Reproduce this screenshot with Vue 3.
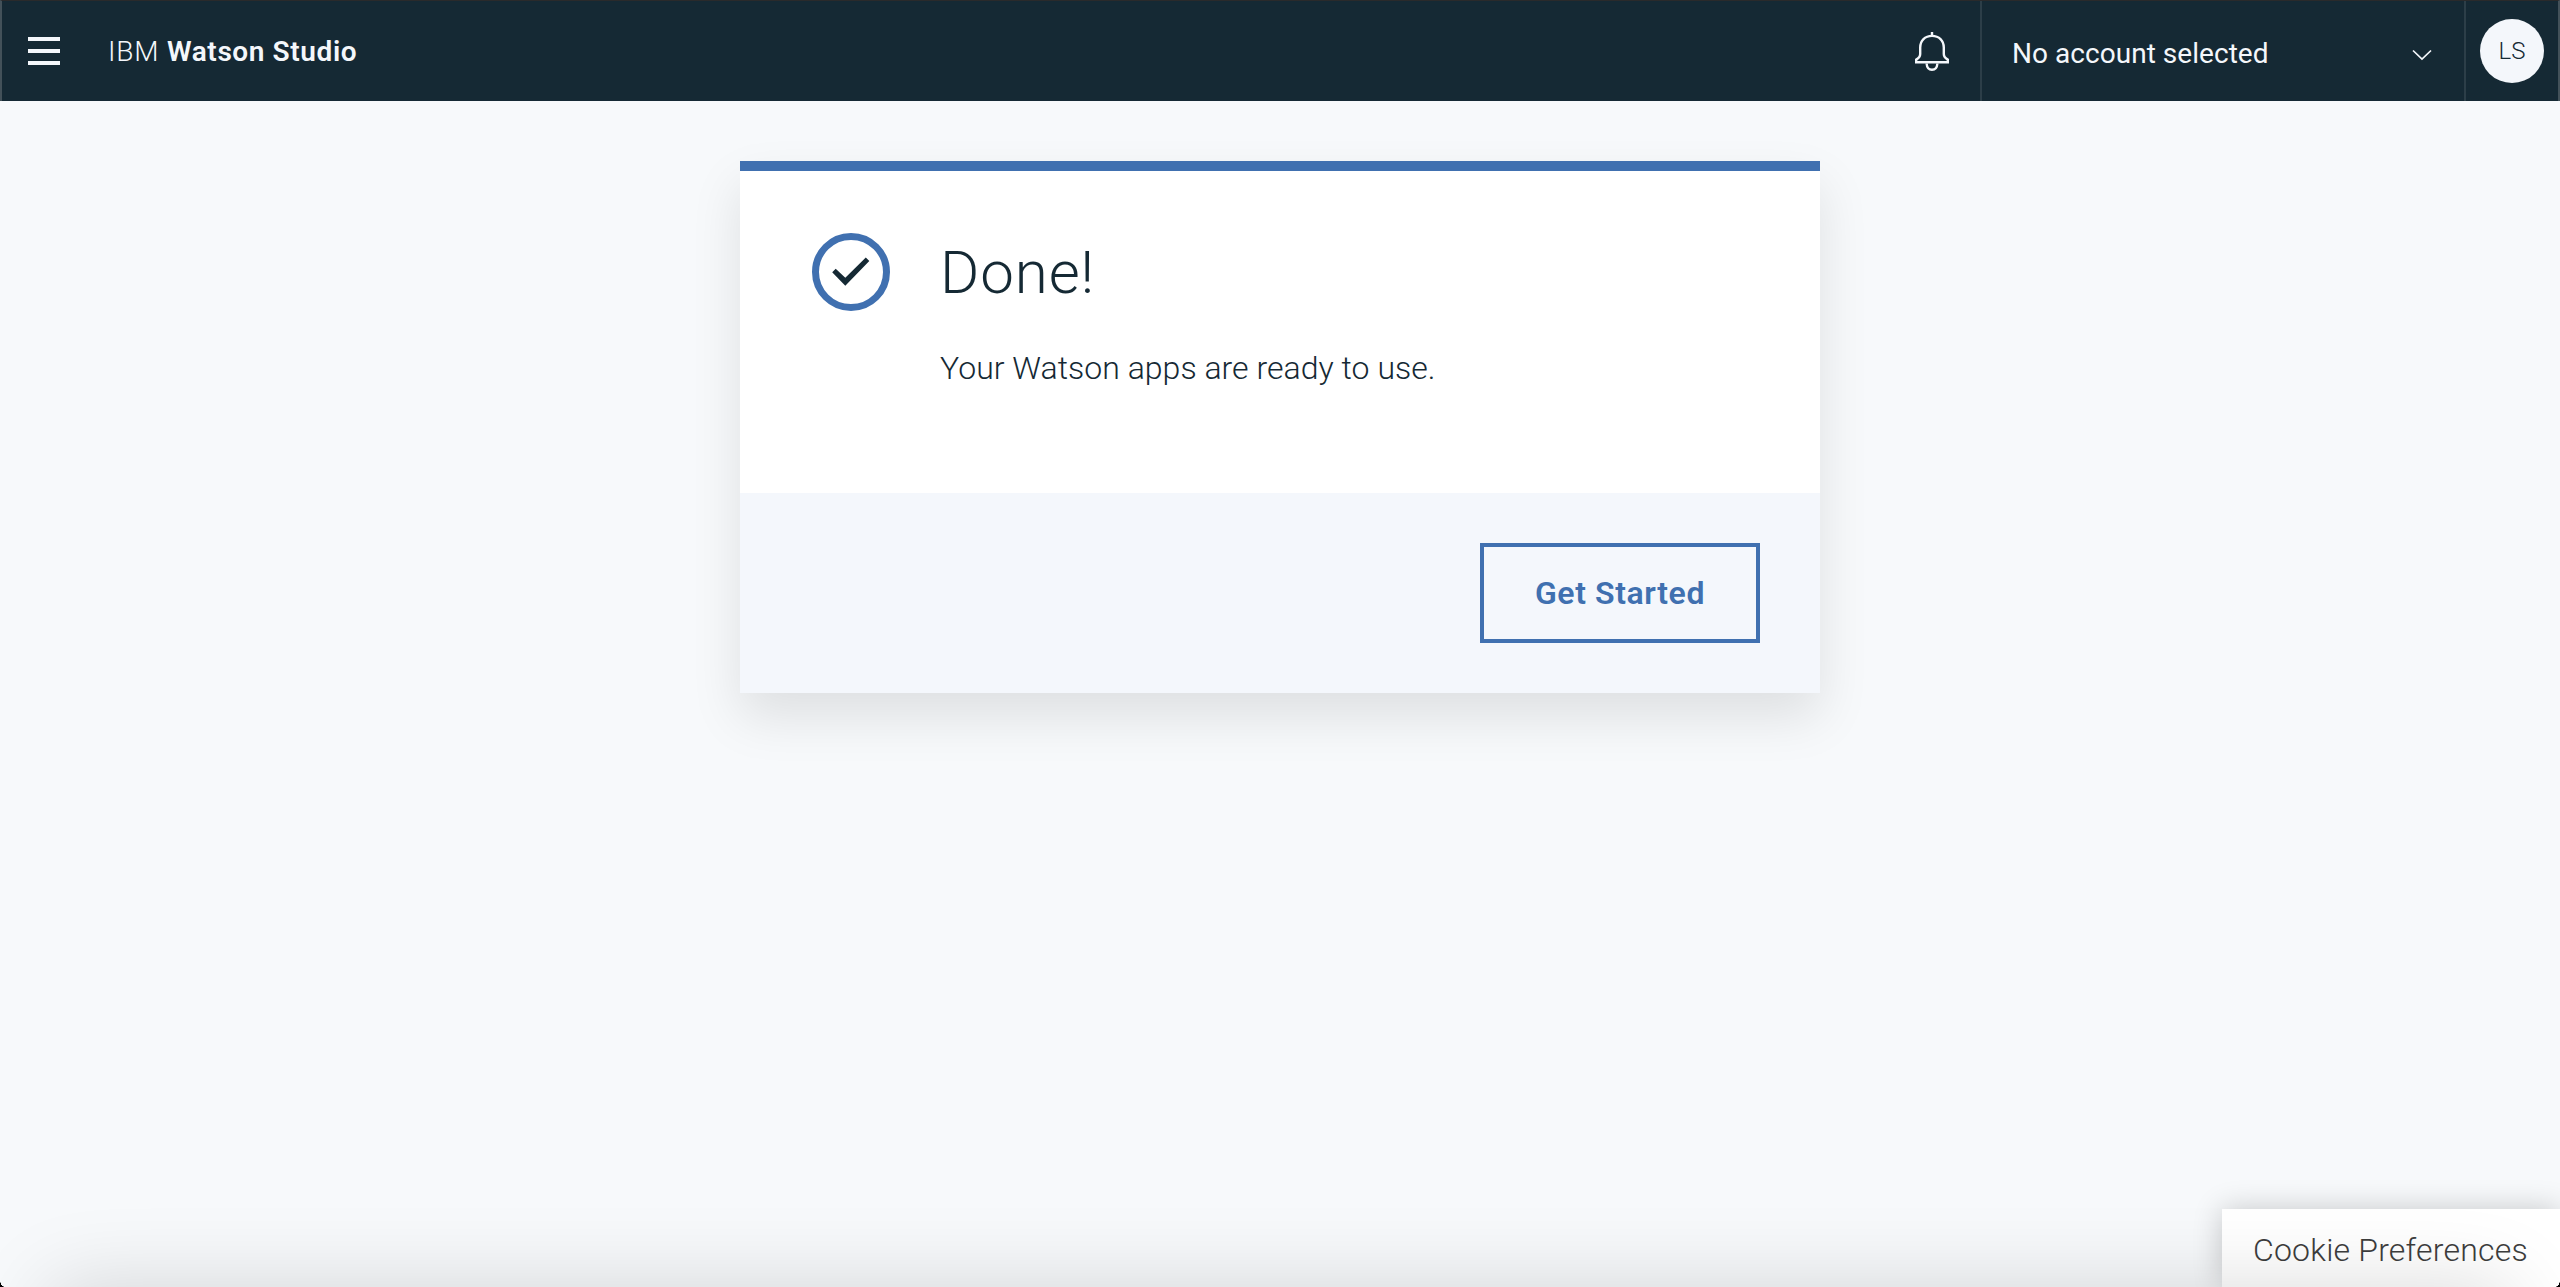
<script setup>
const product = { brand: 'IBM', name: 'Watson Studio' }
const account = 'No account selected'
const initials = 'LS'
</script>

<template>
  <div class="page">
    <header class="header">
      <button class="menu" aria-label="Menu"><i></i><i></i><i></i></button>
      <div class="product"><span class="brand">{{ product.brand }}</span><b>{{ product.name }}</b></div>
      <button class="bell" aria-label="Notifications">
        <svg width="34" height="40" viewBox="0 0 34 40" fill="none" stroke="#f4f7fb" stroke-width="2.4">
          <path d="M17 0v4" />
          <path d="M1.200 30.300v-2.700c2.600-1.400 4-3.200 4-5.600v-6.400C5.200 8.500 10 3.900 17 3.900S28.800 8.500 28.800 15.600V22c0 2.400 1.400 4.200 4 5.600v2.700z" />
          <path d="M11.600 31.500c.3 4 2.300 6.300 5.400 6.300s5.100-2.300 5.400-6.300" />
        </svg>
      </button>
      <div class="account">
        <span class="account-name">{{ account }}</span>
        <svg width="20" height="12" viewBox="0 0 20 12" fill="none" stroke="#f4f7fb" stroke-width="1.7"><path d="M1 1.500l9 8.500 9-8.500" /></svg>
      </div>
      <div class="user"><span class="avatar"><span>{{ initials }}</span></span></div>
    </header>

    <main class="card">
      <section class="body">
        <svg class="check" width="78" height="78" viewBox="0 0 78 78">
          <circle cx="39" cy="39" r="35.500" fill="none" stroke="#4070b0" stroke-width="7" />
          <path fill="#152934" d="M20.200 39.200l3.500-3.400 9.600 9 20.500-20.300 3.500 3.500-24 24.700z" />
        </svg>
        <div class="copy">
          <h1><span>Done!</span></h1>
          <p><span>Your Watson apps are ready to use.</span></p>
        </div>
      </section>
      <footer class="actions">
        <button class="start"><span>Get Started</span></button>
      </footer>
    </main>

    <div class="cookies"><span>Cookie Preferences</span></div>
    <div class="edge-shadow"></div>
    <i class="corner left"></i>
    <i class="corner right"></i>
  </div>
</template>

<style>
body { margin: 0; background: #f7f9fb; }
</style>

<style scoped>
* { box-sizing: border-box; }
button { margin: 0; padding: 0; background: none; border: 0; font: inherit; color: inherit; }
svg { display: block; }
.page {
  position: relative; height: 1287px; overflow: hidden; background: #f7f9fb;
  font-family: Roboto, "Open Sans", sans-serif; font-weight: 340; color: #152934;
}
.header {
  display: flex; align-items: stretch; height: 101px; background: #152934; color: #f4f7fb;
  border-top: 1px solid #2a2a2b; border-left: 2px solid #435159; border-right: 2px solid #435159;
  font-size: 28px; white-space: nowrap;
}
.menu { display: flex; flex-direction: column; gap: 8px; width: 32px; margin: 36px 0 0 26px; }
.menu i { height: 4px; background: #f4f7fb; }
.product { margin-left: 48px; line-height: 101px; flex: 1; }
.brand { display: inline-block; width: 59px; letter-spacing: 0.8px; }
.product b { font-weight: 600; letter-spacing: 0.6px; }
.bell { align-self: flex-start; margin: 31px 31px 0 0; }
.account {
  display: flex; align-items: center; justify-content: space-between; width: 484px; padding: 2px 32px 0 30px;
  border-left: 2px solid #2c3e48; font-weight: 400;
}
.account svg { margin-top: 6px; }
.account-name { padding-top: 2px; letter-spacing: 0.04px; }
.user { width: 94px; border-left: 2px solid #2c3e48; padding: 18px 0 0 14px; }
.avatar {
  display: flex; align-items: center; justify-content: center; width: 64px; height: 64px;
  border-radius: 50%; background: #f4f7fb; color: #152934; font-size: 24px; font-weight: 350;
}
.card {
  width: 1080px; margin: 60px auto 0; border-top: 10px solid #4070b0; background: #fff;
  box-shadow: 0 24px 48px rgba(0, 0, 0, 0.1);
}
.body { display: flex; height: 322px; padding: 62px 72px 0; }
.copy { margin-left: 50px; white-space: nowrap; }
h1 { margin: 0; font-size: 60px; line-height: 80px; font-weight: 320; letter-spacing: 0.9px; }
p { margin: 34px 0 0; font-size: 32px; line-height: 42px; letter-spacing: 0.02px; }
.actions { display: flex; justify-content: flex-end; height: 200px; padding: 50px 60px; background: #f4f7fc; }
.start {
  width: 280px; height: 100px; border: 4px solid #4070b0; color: #4070b0;
  font-size: 32px; font-weight: 600; letter-spacing: 0.6px;
}
.cookies {
  position: absolute; right: 0; bottom: 0; width: 338px; height: 78px; padding-left: 31px;
  background: #fff; box-shadow: 0 0 30px rgba(0, 0, 0, 0.2); color: #3d3d3d;
  font-size: 32px; line-height: 82px; letter-spacing: 0.2px; white-space: nowrap;
}
.edge-shadow {
  position: absolute; top: 100%; left: 50px; right: 50px; height: 200px;
  box-shadow: 0 0 84px rgba(0, 0, 0, 0.15);
}
.corner { position: absolute; bottom: 0; width: 5px; height: 7px; }
.corner.left { left: 0; background: radial-gradient(ellipse 5px 7px at 100% 0, transparent 95%, #000 100%); }
.corner.right { right: 0; background: radial-gradient(ellipse 5px 7px at 0 0, transparent 95%, #000 100%); }
</style>
